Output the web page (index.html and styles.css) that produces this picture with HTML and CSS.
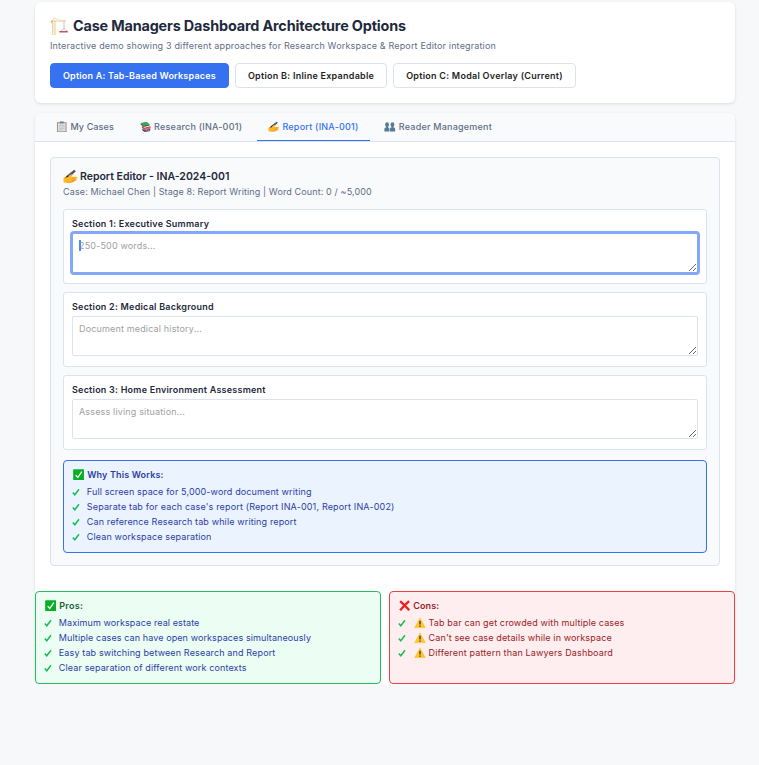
FILE: index.html
```html
<!DOCTYPE html>
<html lang="en">
<head>
<meta charset="utf-8">
<title>Case Managers Dashboard Architecture Options</title>
<link rel="stylesheet" href="styles.css">
</head>
<body>
<svg class="defs" aria-hidden="true">
  <symbol id="hand" viewBox="0 0 14 14">
    <path d="M.5 8.2 3.4 6.6 6.6 4.8Q8.6 4.2 8.8 5.2L7.8 7.2 12.8 7.2Q14 7.6 13.4 8.6L11.9 9Q13.4 9.6 12.6 10.6L10.8 11.2Q9.6 12.8 6.4 12.9L.5 12.6Z" fill="#ffb526"/>
    <path d="M8.6 9h3.4M8.2 10.8h3.4M3 12.6Q7 13.2 10.4 11.6" stroke="#dd9020" stroke-width=".5" fill="none"/>
    <path d="M4.4 5.6 10.4.8 12 2 7 6.8 4.9 7.2Z" fill="#55565c"/>
    <path d="M4.4 5.6 2 8.2l3.4-1Z" fill="#2c2a26"/>
    <path d="M5.2 6.6Q7.8 4.4 8.6 5.2L7 7.8 5.4 8.4Z" fill="#ffbd3a"/>
  </symbol>
  <symbol id="checkbox" viewBox="0 0 12 12">
    <rect x=".2" y=".2" width="11.6" height="11.6" rx="1" fill="#08ae24"/>
    <path d="M2.8 6.5 5 9 9.3 2.8" stroke="#fff" stroke-width="1.4" fill="none"/>
  </symbol>
  <symbol id="tick" viewBox="0 0 8 8">
    <path d="M.8 4.5 2.8 6.8 7 1.3" stroke="#16bd55" stroke-width="1.5" fill="none"/>
  </symbol>
  <symbol id="warn" viewBox="0 0 12 12">
    <path d="M6 1.2 11.2 10.6H.8Z" fill="#ffc52e" stroke="#ffc52e" stroke-width=".8" stroke-linejoin="round"/>
    <path d="M6 3.8v3.7M6 8.5v1.3" stroke="#39352d" stroke-width="1.3"/>
  </symbol>
</svg>
<div class="page">
  <header class="card hero">
    <h1><svg class="crane" viewBox="0 0 18 18">
      <path d="M2.6 17.4V3M5 17.4V3M1 4.2h15" stroke="#ecd09a" stroke-width="1" fill="none"/>
      <path d="M2.6 6 5 8 2.6 10 5 12 2.6 14 5 16M3 3.2 4.2.6 8 3 15.6 3.6M1.6 17.3h4.4" stroke="#f0d8a8" stroke-width=".9" fill="none"/>
      <path d="M.8 3.6h2v2.2h-2z" fill="#d8bd8a"/>
      <path d="M14 4.5v7.3M10.4 14.2l3.6-2.6 3.4 2.6" stroke="#a3adb5" stroke-width=".7" fill="none"/>
      <path d="M9.3 14h8.5v1.5H9.3z" fill="#c05a55"/>
    </svg><span>Case Managers Dashboard Architecture Options</span></h1>
    <p class="subtitle">Interactive demo showing 3 different approaches for Research Workspace &amp; Report Editor integration</p>
    <div class="options">
      <button class="option selected">Option A: Tab-Based Workspaces</button>
      <button class="option">Option B: Inline Expandable</button>
      <button class="option">Option C: Modal Overlay (Current)</button>
    </div>
  </header>
  <main class="card workspace">
    <nav class="tabs">
      <a class="tab short"><svg class="icon" viewBox="0 0 12 12"><path d="M1 1.3h10v10.4H1z" fill="#a58a70"/><path d="M2 2.3h8v8.5H2z" fill="#dfe3e6"/><path d="M4 .5h4v2H4z" fill="#737b83"/><path d="M3 4.5h6M3 6.2h6M3 7.9h6M3 9.4h4" stroke="#a4adb5" stroke-width=".6"/></svg><span>My Cases</span></a>
      <a class="tab"><svg class="icon" viewBox="0 0 12 12"><path d="M.8 2 6.8.7 9.8 3 4 4.6Z" fill="#37a552"/><path d="M.8 2v1.8L4 6.3l6-1.5V3L4 4.6Z" fill="#23763c"/><path d="m2 5 2.4 2L11 5.5v2.2L5 9.4 2 7Z" fill="#d5344b"/><path d="m2.4 7.8 2.4 1.9L10.6 8v2.4L5 11.6 2.4 9.7Z" fill="#334259"/><path d="M5 8.5 10.7 7M5 10.8 10.3 9.5" stroke="#e5d8d2" stroke-width=".5"/></svg><span>Research (INA-001)</span></a>
      <a class="tab active"><svg class="icon"><use href="#hand"/></svg><span>Report (INA-001)</span></a>
      <a class="tab"><svg class="icon" viewBox="0 0 12 12"><g fill="#567b94"><ellipse cx="3.2" cy="3.8" rx="2" ry="2.5"/><path d="M.4 11V8Q.7 6.8 2.5 6.6V5.5h1.6v1.1q1.5.2 1.5 1.4v3Z"/><ellipse cx="8.8" cy="3.8" rx="2" ry="2.5"/><path d="M6.2 11V8q.1-1.2 1.8-1.4V5.5h1.6v1.1q1.9.2 2 1.4v3Z"/></g></svg><span>Reader Management</span></a>
    </nav>
    <section class="content">
      <div class="editor">
        <h2><svg class="hand"><use href="#hand"/></svg><span>Report Editor - INA-2024-001</span></h2>
        <p class="meta">Case: Michael Chen | Stage 8: Report Writing | Word Count: 0 / ~5,000</p>
        <div class="section"><label for="s1">Section 1: Executive Summary</label><div class="field"><textarea id="s1" class="focused" placeholder="250-500 words..."></textarea><i class="caret"></i></div></div>
        <div class="section"><label for="s2">Section 2: Medical Background</label><div class="field"><textarea id="s2" placeholder="Document medical history..."></textarea></div></div>
        <div class="section"><label for="s3">Section 3: Home Environment Assessment</label><div class="field"><textarea id="s3" placeholder="Assess living situation..."></textarea></div></div>
        <div class="note info">
          <h3><svg><use href="#checkbox"/></svg><span>Why This Works:</span></h3>
          <ul>
            <li><svg class="tick"><use href="#tick"/></svg><span>Full screen space for 5,000-word document writing</span></li>
            <li class="wide"><svg class="tick"><use href="#tick"/></svg><span>Separate tab for each case's report (Report INA-001, Report INA-002)</span></li>
            <li><svg class="tick"><use href="#tick"/></svg><span>Can reference Research tab while writing report</span></li>
            <li><svg class="tick"><use href="#tick"/></svg><span>Clean workspace separation</span></li>
          </ul>
        </div>
      </div>
    </section>
    <div class="compare">
      <div class="note pros">
        <h3><svg><use href="#checkbox"/></svg><span>Pros:</span></h3>
        <ul>
          <li><svg class="tick"><use href="#tick"/></svg><span>Maximum workspace real estate</span></li>
          <li><svg class="tick"><use href="#tick"/></svg><span>Multiple cases can have open workspaces simultaneously</span></li>
          <li class="wide"><svg class="tick"><use href="#tick"/></svg><span>Easy tab switching between Research and Report</span></li>
          <li class="wide"><svg class="tick"><use href="#tick"/></svg><span>Clear separation of different work contexts</span></li>
        </ul>
      </div>
      <div class="note cons">
        <h3><svg viewBox="0 0 12 12"><path d="M1.2 1.2Q5 4.5 10.8 10.8M10.6 1.2Q6.5 4.8 1.2 10.8" stroke="#f01e25" stroke-width="2.5" fill="none"/></svg><span>Cons:</span></h3>
        <ul>
          <li><svg class="tick"><use href="#tick"/></svg><svg class="warn"><use href="#warn"/></svg><span>Tab bar can get crowded with multiple cases</span></li>
          <li><svg class="tick"><use href="#tick"/></svg><svg class="warn"><use href="#warn"/></svg><span>Can't see case details while in workspace</span></li>
          <li class="wide"><svg class="tick"><use href="#tick"/></svg><svg class="warn"><use href="#warn"/></svg><span>Different pattern than Lawyers Dashboard</span></li>
        </ul>
      </div>
    </div>
  </main>
</div>
</body>
</html>
```
FILE: styles.css
```css
* { box-sizing: border-box; margin: 0; padding: 0; }
body {
  background: #f6f8fa;
  color: #1e293b;
  font: 9px/15px Inter, "Liberation Sans", sans-serif;
  letter-spacing: .16px;
}
svg { display: block; flex: none; }
.defs { width: 0; height: 0; position: absolute; }
.page { width: 700px; margin: 0 auto 0 35px; padding-top: 2px; }
.card { background: #fff; border-radius: 6px; box-shadow: 0 1px 3px rgba(30, 41, 59, .13); }
.hero { height: 101px; padding: 13px 15px 15px; }
h1 { display: flex; align-items: center; height: 21px; font-size: 14.4px; font-weight: 700; letter-spacing: -.16px; white-space: nowrap; }
.crane { width: 18px; height: 18px; margin: 1px 5px 0 0; }
.subtitle { color: #5f6e85; height: 15px; margin: 2px 0 10px; }
.options { display: flex; gap: 6px; }
.option {
  height: 25px; padding: 0 12px; border: 1px solid #dce2ec; border-radius: 4px;
  background: #fff; color: #1e1e1e; font: inherit; font-weight: 600; letter-spacing: .26px; white-space: nowrap;
}
.option.selected { background: #3671f0; border-color: #3671f0; color: #fff; letter-spacing: .2px; }
.workspace { margin-top: 10px; height: 571px; }
.tabs { display: flex; gap: 3.7px; height: 29px; padding: 0 10px; background: #f8fafc; border-bottom: 1px solid #dbe3ee; border-radius: 6px 6px 0 0; }
.tab { display: flex; align-items: center; gap: 3px; padding: 0 11px; height: 28px; color: #5f6e85; font-weight: 500; letter-spacing: .22px; border-bottom: 1px solid transparent; white-space: nowrap; }
.tab.short { letter-spacing: .1px; }
.tab.active { color: #3671f0; border-color: #3671f0; }
.icon { width: 11.5px; height: 11.5px; }
.content { padding: 15px 15px 25px; }
.editor { height: 409px; padding: 10px 12px; background: #f8fafc; border: 1px solid #dbe3ee; border-radius: 4px; }
h2 { display: flex; align-items: center; height: 16px; gap: 2px; font-size: 10.5px; font-weight: 600; letter-spacing: 0; }
.hand { width: 15px; height: 15px; }
.meta { color: #5f6e85; margin-bottom: 10px; letter-spacing: .125px; }
.section { height: 75px; margin-bottom: 8px; padding: 6px 8px 0; background: #fff; border: 1px solid #dbe3ee; border-radius: 3px; }
label { display: block; height: 17px; font-weight: 600; letter-spacing: .235px; }
.field { position: relative; }
textarea {
  display: block; width: 626px; height: 40px; padding: 4px 6px; border: 1px solid #dbe3ee; border-radius: 2px;
  background: #fff; font: inherit; letter-spacing: inherit; resize: vertical; outline: 0;
}
textarea::placeholder { color: #a0a0a0; }
textarea.focused { border-color: #83a8f8; box-shadow: 0 0 0 2px #83a8f8; }
.caret { position: absolute; left: 7px; top: 7px; width: 2px; height: 11px; background: #4a8bf8; }
.note { height: 93px; padding: 6px 8px; border: 1px solid; border-radius: 4px; }
.note h3 { display: flex; align-items: center; gap: 3.2px; height: 14px; margin-bottom: 3px; padding-left: .6px; font-size: 9px; font-weight: 600; }
.note h3 svg { width: 11.4px; height: 11.4px; margin-top: 1px; }
.note ul { list-style: none; color: #2b3ea5; letter-spacing: .13px; }
.note li { display: flex; align-items: center; height: 15px; }
.note .wide { letter-spacing: .16px; }
.tick { width: 8px; height: 8px; margin-right: 6.8px; }
.warn { width: 12px; height: 12px; margin: 0 3px 0 .8px; }
.info { margin-top: 10px; background: #ebf3fe; border-color: #3671f0; }
.info h3 { color: #2b3ea5; }
.compare { display: grid; grid-template-columns: 346px 346px; gap: 8px; }
.pros { background: #ecfdf4; border-color: #2abb61; }
.pros ul { letter-spacing: .1px; }
.pros .wide { letter-spacing: .135px; }
.pros h3 { color: #17602f; letter-spacing: .3px; }
.cons { background: #feeeef; border-color: #e94146; }
.cons h3, .cons ul { color: #982326; }
```
